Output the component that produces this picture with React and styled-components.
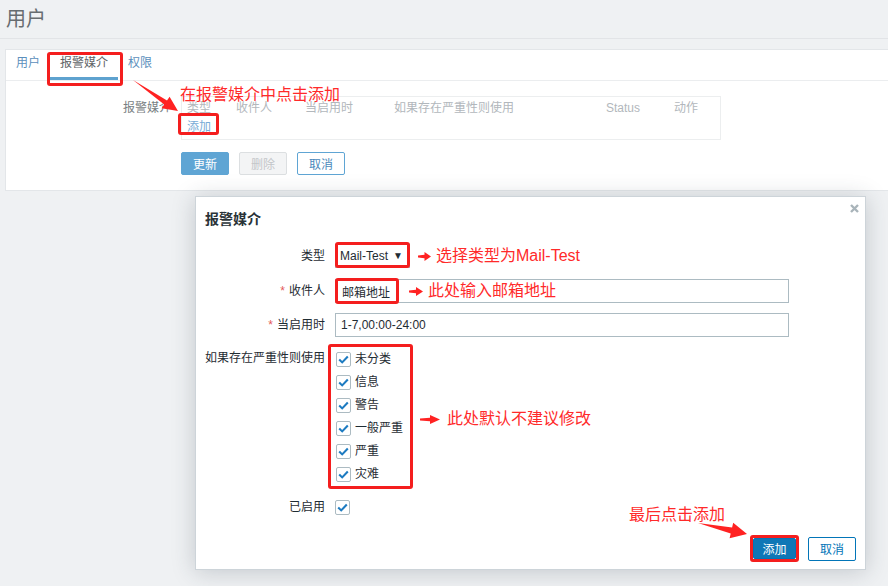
import React from "react";
import styled, { createGlobalStyle, css } from "styled-components";

const Global = createGlobalStyle`
  html, body { margin: 0; padding: 0; }
  body {
    background: #eff1f3;
    font-family: "Liberation Sans", "Noto Sans CJK SC", sans-serif;
    font-size: 12px;
    color: #1f2c33;
  }
  * { box-sizing: border-box; }
`;

const RED = "#f41e1e";

const Page = styled.div`
  position: relative;
  width: 888px;
  height: 586px;
  overflow: hidden;
  background: #eff1f3;
`;

const TopBar = styled.div`
  height: 39px;
  padding: 8px 0 0 6px;
  border-bottom: 1px solid #e2e4e7;
`;

const Title = styled.h1`
  margin: 0;
  font-size: 20px;
  line-height: 22px;
  font-weight: normal;
  color: #676c70;
`;

const Panel = styled.section`
  margin: 10px 0 0 5px;
  background: #fff;
  border: 1px solid #e3e6e9;
  border-right: none;
`;

const TabBar = styled.div`
  display: flex;
  height: 31px;
  border-bottom: 1px solid #ebedef;
`;

const marked = css`
  position: relative;
  &::after {
    content: "";
    position: absolute;
    top: ${(p) => p.$t ?? 0}px;
    right: ${(p) => p.$r ?? 0}px;
    bottom: ${(p) => p.$b ?? 0}px;
    left: ${(p) => p.$l ?? 0}px;
    border: 3px solid ${RED};
    border-radius: 3px;
    pointer-events: none;
  }
`;

const Tab = styled.div`
  height: 30px;
  padding: 0 10px;
  line-height: 27px;
  border-bottom: 3px solid ${(p) => (p.$active ? "#5ea2cf" : "transparent")};
  color: ${(p) => (p.$active ? "#5f6467" : "#5b8fbc")};
  ${(p) => p.$marked && marked}
`;

const PanelBody = styled.div`
  padding: 15px 0 15px 0;
`;

const MediaGrid = styled.div`
  display: grid;
  grid-template-columns: 165px 540px;
  column-gap: 10px;
`;

const MediaLabel = styled.div`
  text-align: right;
  line-height: 22px;
  padding-top: 1px;
  color: #7a7f83;
`;

const MediaTable = styled.div`
  height: 44px;
  border: 1px solid #eceeef;
  padding: 0 0 4px 5px;
`;

const TableHead = styled.div`
  display: grid;
  grid-template-columns: 49px 69px 89px 212px 68px auto;
  line-height: 22px;
  color: #b2b7bc;
`;

const AddLink = styled.span`
  display: inline-block;
  line-height: 16px;
  color: #78acd6;
  ${marked}
`;

const ButtonRow = styled.div`
  display: flex;
  gap: 10px;
  margin-top: 12px;
`;

const PanelButton = styled.button`
  width: 48px;
  height: 23px;
  padding: 0;
  font: inherit;
  font-size: 12px;
  border-radius: 2px;
  border: 1px solid #5fa5d4;
  background: #5fa5d4;
  color: #fff;
  ${(p) =>
    p.$variant === "disabled" &&
    css`
      background: #f3f4f5;
      border-color: #dcdfe1;
      color: #c3c6c9;
    `}
  ${(p) =>
    p.$variant === "outline" &&
    css`
      background: #fff;
      color: #4b89bb;
    `}
`;

const Dialog = styled.div`
  position: absolute;
  left: 195px;
  top: 196px;
  width: 671px;
  height: 374px;
  background: #fff;
  border: 1px solid #cdd4d9;
  box-shadow: 0 2px 22px rgba(40, 55, 70, 0.22);
  display: flex;
  flex-direction: column;
  z-index: 2;
`;

const DialogHead = styled.div`
  position: relative;
  height: 44px;
  padding: 14px 10px 0 9px;
`;

const DialogTitle = styled.h2`
  margin: 0;
  font-size: 14px;
  line-height: 16px;
  font-weight: bold;
  color: #2a3338;
`;

const Close = styled.span`
  position: absolute;
  top: 7px;
  right: 6px;
  width: 9px;
  height: 9px;
  display: flex;
`;

const Form = styled.div`
  display: flex;
  flex-direction: column;
  padding: 3px 76px 0 9px;
`;

const FormRow = styled.div`
  display: grid;
  grid-template-columns: 120px 1fr;
  column-gap: 10px;
  align-items: ${(p) => p.$align || "center"};
  margin-top: ${(p) => p.$mt || 0}px;
`;

const Label = styled.div`
  text-align: right;
  line-height: 16px;
  color: #1f2c33;
  margin-top: ${(p) => p.$mt || 0}px;
`;

const Req = styled.span`
  color: #e45959;
  margin-right: 4px;
`;

const Control = styled.div`
  display: flex;
  align-items: center;
  margin-left: ${(p) => p.$ml || 0}px;
`;

const Select = styled.div`
  width: 75px;
  height: 24px;
  border: 1px solid #acbbc2;
  display: flex;
  align-items: center;
  justify-content: space-between;
  padding: 0 6px 0 4px;
  ${marked}
`;

const Caret = styled.span`
  font-size: 10px;
  line-height: 10px;
  color: #1f2c33;
`;

const Input = styled.div`
  width: 100%;
  height: 24px;
  border: 1px solid #acbbc2;
  display: flex;
  align-items: center;
  padding-left: ${(p) => p.$pl ?? 5}px;
  color: #1f2c33;
`;

const ValueChip = styled.span`
  height: 26px;
  margin: -1px 0 -1px -1px;
  border: 3px solid ${RED};
  border-radius: 3px;
  padding: 0 6px 0 4px;
  display: flex;
  align-items: center;
`;

const Note = styled.span`
  color: #ff2a2a;
  font-size: 16px;
  line-height: 18px;
  margin-left: ${(p) => p.$ml || 0}px;
  margin-top: ${(p) => p.$mt || 0}px;
  white-space: nowrap;
`;

const ArrowWrap = styled.span`
  display: flex;
  margin-left: ${(p) => p.$ml || 0}px;
  margin-top: ${(p) => p.$mt || 0}px;
`;

const SeverityBox = styled.div`
  width: 85px;
  border: 3px solid ${RED};
  border-radius: 3px;
  padding: 4px 0 4px 5px;
  display: flex;
  flex-direction: column;
  gap: 7px;
`;

const CheckItem = styled.label`
  display: flex;
  align-items: center;
  height: 16px;
  gap: 4px;
  line-height: 16px;
  color: #1f2c33;
  white-space: nowrap;
`;

const Box = styled.span`
  width: 15px;
  height: 15px;
  border: 1px solid #acbbc2;
  border-radius: 2px;
  display: flex;
  align-items: center;
  justify-content: center;
  flex: none;
`;

const Footer = styled.div`
  margin-top: auto;
  display: flex;
  justify-content: flex-end;
  align-items: center;
  gap: 9px;
  padding: 0 9px 7px 0;
`;

const AddFrame = styled.div`
  border: 3px solid ${RED};
  border-radius: 3px;
  display: flex;
`;

const DialogButton = styled.button`
  height: ${(p) => (p.$primary ? 21 : 24)}px;
  width: ${(p) => (p.$primary ? 43 : 48)}px;
  padding: 0;
  font: inherit;
  font-size: 12px;
  border-radius: 2px;
  border: 1px solid #0275b8;
  background: ${(p) => (p.$primary ? "#0f77b6" : "#fff")};
  color: ${(p) => (p.$primary ? "#fff" : "#0275b8")};
`;

const Callout = styled.div`
  position: absolute;
  left: ${(p) => p.$x}px;
  top: ${(p) => p.$y}px;
  color: #ff2a2a;
  font-size: 16px;
  line-height: 18px;
  white-space: nowrap;
  z-index: 4;
`;

const Overlay = styled.svg`
  position: absolute;
  left: 0;
  top: 0;
  pointer-events: none;
  z-index: 5;
`;

const Check = () => (
  <Box>
    <svg width="11" height="9" viewBox="0 0 11 9">
      <path d="M1.2 4.6 L4.2 7.4 L9.8 1.6" fill="none" stroke="#1d7bc1" strokeWidth="2.1" />
    </svg>
  </Box>
);

const SmallArrow = ({ w = 14, h = 9, ml, mt }) => (
  <ArrowWrap $ml={ml} $mt={mt}>
    <svg width={w} height={h} viewBox={`0 0 ${w} ${h}`}>
      <polygon
        points={`0,${h * 0.4} ${w * 0.5},${h * 0.3} ${w * 0.5},0 ${w},${h / 2} ${w * 0.5},${h} ${w * 0.5},${h * 0.7} 0,${h * 0.6}`}
        fill="#f22"
      />
    </svg>
  </ArrowWrap>
);

const severities = ["未分类", "信息", "警告", "一般严重", "严重", "灾难"];

export default function App() {
  return (
    <>
      <Global />
      <Page>
        <TopBar>
          <Title>用户</Title>
        </TopBar>
        <Panel>
          <TabBar>
            <Tab>用户</Tab>
            <Tab $active $marked $t={2} $r={-5} $b={-9} $l={-3}>
              报警媒介
            </Tab>
            <Tab>权限</Tab>
          </TabBar>
          <PanelBody>
            <MediaGrid>
              <MediaLabel>报警媒介</MediaLabel>
              <div>
                <MediaTable>
                  <TableHead>
                    <span>类型</span>
                    <span>收件人</span>
                    <span>当启用时</span>
                    <span>如果存在严重性则使用</span>
                    <span>Status</span>
                    <span>动作</span>
                  </TableHead>
                  <AddLink $t={-6} $r={-8} $b={0} $l={-9}>添加</AddLink>
                </MediaTable>
                <ButtonRow>
                  <PanelButton>更新</PanelButton>
                  <PanelButton $variant="disabled">删除</PanelButton>
                  <PanelButton $variant="outline">取消</PanelButton>
                </ButtonRow>
              </div>
            </MediaGrid>
          </PanelBody>
        </Panel>

        <Callout $x={180} $y={86}>在报警媒介中点击添加</Callout>

        <Dialog>
          <DialogHead>
            <DialogTitle>报警媒介</DialogTitle>
            <Close>
              <svg width="9" height="9" viewBox="0 0 9 9">
                <path d="M1 1 L8 8 M8 1 L1 8" stroke="#a9b4ba" strokeWidth="2.4" />
              </svg>
            </Close>
          </DialogHead>
          <Form>
            <FormRow>
              <Label>类型</Label>
              <Control>
                <Select $t={-3} $r={-1} $b={-1} $l={-1}>
                  <span>Mail-Test</span>
                  <Caret>▼</Caret>
                </Select>
                <SmallArrow w={13} h={9} ml={8} />
                <Note $ml={5}>选择类型为Mail-Test</Note>
              </Control>
            </FormRow>
            <FormRow $mt={11}>
              <Label>
                <Req>*</Req>收件人
              </Label>
              <Input $pl={0}>
                <ValueChip>邮箱地址</ValueChip>
                <SmallArrow w={14} h={9} ml={10} />
                <Note $ml={5}>此处输入邮箱地址</Note>
              </Input>
            </FormRow>
            <FormRow $mt={10}>
              <Label>
                <Req>*</Req>当启用时
              </Label>
              <Input>1-7,00:00-24:00</Input>
            </FormRow>
            <FormRow $mt={7} $align="start">
              <Label $mt={6}>如果存在严重性则使用</Label>
              <Control $ml={-7}>
                <SeverityBox>
                  {severities.map((s) => (
                    <CheckItem key={s}>
                      <Check />
                      {s}
                    </CheckItem>
                  ))}
                </SeverityBox>
                <SmallArrow w={20} h={9} ml={7} mt={5} />
                <Note $ml={7} $mt={5}>此处默认不建议修改</Note>
              </Control>
            </FormRow>
            <FormRow $mt={10}>
              <Label>已启用</Label>
              <Control>
                <Check />
              </Control>
            </FormRow>
          </Form>
          <Footer>
            <AddFrame>
              <DialogButton $primary>添加</DialogButton>
            </AddFrame>
            <DialogButton>取消</DialogButton>
          </Footer>
        </Dialog>

        <Callout $x={629} $y={506}>最后点击添加</Callout>

        <Overlay width="888" height="586" viewBox="0 0 888 586">
          <polygon
            points="133,80 164.2,104.6 161.6,108.3 178,111 169.6,96.7 167,100.4"
            fill="#f22"
          />
          <polygon
            points="698,523 730.7,533.4 729.6,538.3 747,534 733.2,522.7 732.1,527.6"
            fill="#f22"
          />
        </Overlay>
      </Page>
    </>
  );
}
